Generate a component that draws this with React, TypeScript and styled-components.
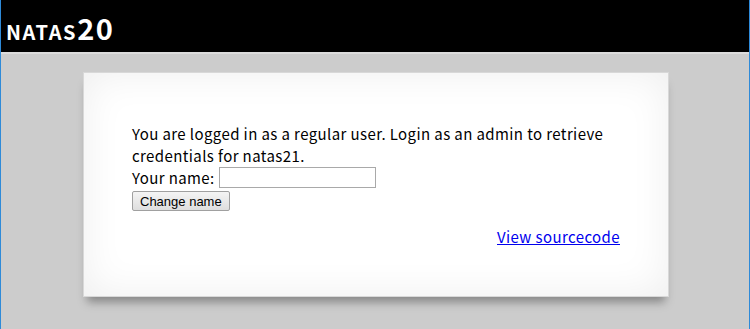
import styled, { createGlobalStyle } from "styled-components";

const GlobalStyle = createGlobalStyle`
  html, body {
    margin: 0;
    padding: 0;
    background: #cccccc;
  }
`;

const Page = styled.div`
  min-height: 329px;
  box-sizing: border-box;
  border-left: 1px solid #2e8ad8;
  border-right: 1px solid #2e8ad8;
  background: #cccccc;
  font-family: "Noto Sans CJK KR", "Noto Sans", sans-serif;
`;

const Header = styled.header`
  height: 52px;
  background: #000;
  border-bottom: 2px solid #dcdcdc;
  display: flex;
  align-items: center;
  padding-left: 5px;
`;

const Title = styled.h1`
  margin: 0;
  color: #fff;
  font-family: "Noto Sans CJK KR", "Noto Sans", sans-serif;
  font-variant: small-caps;
  font-weight: 700;
  font-size: 29px;
  letter-spacing: 1.6px;
  line-height: 1;
  padding-top: 2px;
`;

const Content = styled.main`
  box-sizing: border-box;
  width: 586px;
  margin: 18px 0 0 82px;
  padding: 50px 48px 48px;
  background: #fff;
  border: 1px solid #d8d8d8;
  box-shadow: inset 0 0 40px rgba(0, 0, 0, 0.07), 0 9px 9px -4px rgba(0, 0, 0, 0.35);
  color: #000;
  font-size: 15px;
  line-height: 22px;
  letter-spacing: 0.4px;
`;

const Message = styled.p`
  margin: 0;
`;

const NameForm = styled.form`
  margin: 0;
`;

const NameRow = styled.div`
  display: flex;
  align-items: center;
  gap: 4px;
  height: 21px;
`;

const NameInput = styled.input`
  box-sizing: border-box;
  width: 157px;
  height: 21px;
  border: 1px solid #a9a9a9;
  padding: 1px 2px;
  font-size: 13px;
  background: #fff;
`;

const Button = styled.button`
  box-sizing: border-box;
  margin-top: 3px;
  height: 20px;
  padding: 0 7px;
  border: 1px solid #a0a0a0;
  border-radius: 2px;
  background: linear-gradient(#f4f4f4, #dedede);
  font-family: "Liberation Sans", Arial, sans-serif;
  font-size: 13px;
  letter-spacing: 0;
  color: #000;
`;

const SourceRow = styled.div`
  display: flex;
  justify-content: flex-end;
  margin-top: 15px;
`;

const SourceLink = styled.a`
  color: #0000ee;
  text-decoration: underline;
`;

export default function App() {
  return (
    <>
      <GlobalStyle />
      <Page>
        <Header>
          <Title>natas20</Title>
        </Header>
        <Content>
          <Message>
            You are logged in as a regular user. Login as an admin to retrieve
            credentials for natas21.
          </Message>
          <NameForm onSubmit={(e) => e.preventDefault()}>
            <NameRow>
              Your name: <NameInput name="name" />
            </NameRow>
            <Button type="submit">Change name</Button>
          </NameForm>
          <SourceRow>
            <SourceLink href="#">View sourcecode</SourceLink>
          </SourceRow>
        </Content>
      </Page>
    </>
  );
}
